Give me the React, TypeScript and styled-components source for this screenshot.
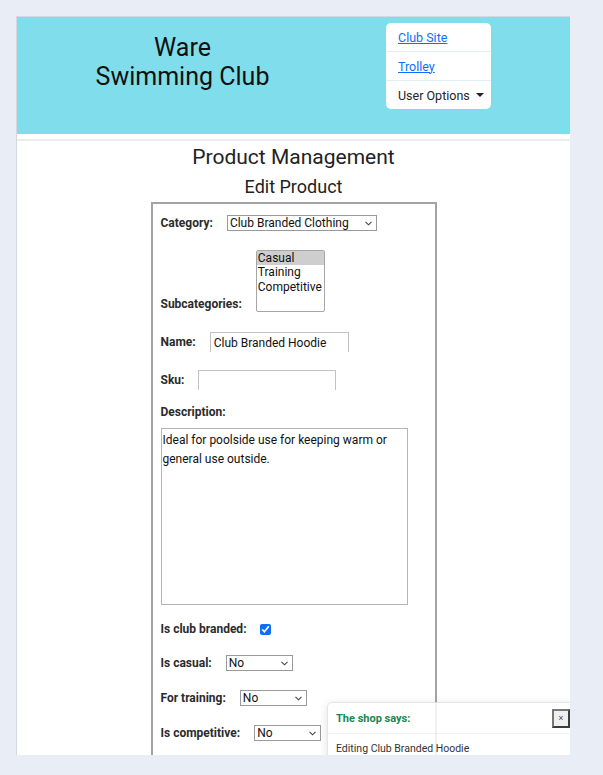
import React from "react";
import styled, { createGlobalStyle } from "styled-components";

const Global = createGlobalStyle`
  html, body { margin: 0; padding: 0; }
  body {
    background: #e9edf5;
    font-family: Roboto, "Liberation Sans", sans-serif;
    color: #212529;
  }
`;

const Frame = styled.div`
  position: relative;
  margin: 16px 0 0 16px;
  width: 554px;
  height: 739px;
  overflow: hidden;
  background: #fff;
  border-left: 1px solid #d4d8df;
  border-top: 1px solid #d4d8df;
  box-sizing: border-box;
`;

const Header = styled.header`
  display: flex;
  align-items: flex-start;
  height: 117px;
  background: #80deec;
`;

const Brand = styled.h1`
  width: 331px;
  margin: 0;
  padding-top: 16px;
  text-align: center;
  font-size: 25px;
  line-height: 29px;
  font-weight: 400;
  color: #111;
`;

const Nav = styled.nav`
  display: flex;
  flex-direction: column;
  width: 105px;
  margin: 6px 0 0 38px;
  background: #fff;
  border-radius: 5px;
  overflow: hidden;
`;

const NavItem = styled.div<{ $last?: boolean }>`
  display: flex;
  align-items: center;
  height: 28px;
  padding-left: 12px;
  font-size: 12.5px;
  border-bottom: ${(p) => (p.$last ? "none" : "1px solid #dff1f4")};
`;

const NavLink = styled.a`
  color: #0d6efd;
  text-decoration: underline;
`;

const Caret = styled.span`
  display: inline-block;
  margin-left: 6px;
  width: 0;
  height: 0;
  border-left: 4px solid transparent;
  border-right: 4px solid transparent;
  border-top: 4px solid #222;
  vertical-align: 2px;
`;

const Divider = styled.div`
  height: 5px;
  border-bottom: 2px solid #ececec;
`;

const Main = styled.main`
  display: flex;
  flex-direction: column;
  align-items: center;
`;

const Title = styled.h2`
  margin: 4px 0 0;
  font-size: 21px;
  line-height: 24px;
  font-weight: 400;
  color: #222;
`;

const SubTitle = styled.h3`
  margin: 7px 0 0;
  font-size: 18px;
  line-height: 22px;
  font-weight: 400;
  color: #222;
`;

const FormBox = styled.form`
  box-sizing: border-box;
  width: 286px;
  margin: 4px 0 0 0;
  padding: 11px 8px 20px;
  border: 2px solid #a3a3a3;
  border-bottom: none;
  display: flex;
  flex-direction: column;
`;

const Row = styled.div<{ $mt: number; $bottom?: boolean }>`
  display: flex;
  align-items: ${(p) => (p.$bottom ? "flex-end" : "center")};
  gap: 14px;
  margin-top: ${(p) => p.$mt}px;
`;

const Label = styled.label`
  font-size: 12px;
  line-height: 15px;
  font-weight: 700;
  color: #2b2b2b;
`;

const SelectWrap = styled.span<{ $w: number }>`
  position: relative;
  display: inline-flex;
  width: ${(p) => p.$w}px;
  height: 16px;
`;

const Select = styled.select`
  appearance: none;
  box-sizing: border-box;
  width: 100%;
  height: 16px;
  padding: 0 14px 0 2px;
  font-family: Roboto, "Liberation Sans", sans-serif;
  font-size: 12px;
  line-height: 14px;
  color: #111;
  background: #fff;
  border: 1px solid #9a9a9a;
  border-radius: 0;
`;

const Chevron = styled.svg`
  position: absolute;
  right: 5px;
  top: 6px;
  width: 7px;
  height: 5px;
  pointer-events: none;
`;

const ListBox = styled.select`
  width: 69px;
  height: 62px;
  padding: 0;
  font-family: Roboto, "Liberation Sans", sans-serif;
  font-size: 12px;
  color: #111;
  border: 1px solid #a6a6a6;
  overflow: hidden;
  option { padding: 0 1px; line-height: 15px; }
`;

const TextInput = styled.input<{ $w: number }>`
  box-sizing: border-box;
  width: ${(p) => p.$w}px;
  height: 20px;
  padding: 0 3px;
  font-family: Roboto, "Liberation Sans", sans-serif;
  font-size: 12px;
  color: #111;
  border: 1px solid #c2c2c2;
  border-bottom: none;
  outline: none;
`;

const TextArea = styled.textarea`
  box-sizing: border-box;
  width: 247px;
  height: 177px;
  margin-top: 8px;
  padding: 2px 1px;
  font-family: Roboto, "Liberation Sans", sans-serif;
  font-size: 12px;
  line-height: 19px;
  color: #111;
  border: 1px solid #b5b5b5;
  resize: none;
`;

const Check = styled.input`
  width: 11px;
  height: 11px;
  margin: 0 0 0 -1px;
  accent-color: #0d6efd;
`;

const Toast = styled.div`
  position: absolute;
  left: 310px;
  top: 685px;
  width: 245px;
  background: rgba(255, 255, 255, 0.85);
  border: 1px solid rgba(0, 0, 0, 0.1);
  border-radius: 5px;
  box-shadow: 0 2px 10px rgba(0, 0, 0, 0.12);
`;

const ToastHead = styled.div`
  display: flex;
  align-items: center;
  justify-content: space-between;
  height: 30px;
  padding: 0 3px 0 8px;
  border-bottom: 1px solid rgba(0, 0, 0, 0.05);
`;

const ToastTitle = styled.strong`
  font-size: 11px;
  color: #198754;
`;

const CloseBtn = styled.button`
  box-sizing: border-box;
  width: 18px;
  height: 19px;
  padding: 0;
  font-size: 9px;
  line-height: 1;
  color: #444;
  background: #efefef;
  border: 2px solid #3c3c3c;
  border-top-color: #777;
  border-left-color: #777;
`;

const ToastBody = styled.div`
  padding: 8px 8px;
  font-size: 10.5px;
  color: #333;
`;

function DropDown({ w, value }: { w: number; value: string }) {
  return (
    <SelectWrap $w={w}>
      <Select defaultValue={value}>
        <option value={value}>{value}</option>
      </Select>
      <Chevron viewBox="0 0 7 5">
        <path d="M0.5 0.8 L3.5 3.8 L6.5 0.8" fill="none" stroke="#444" strokeWidth="1.1" />
      </Chevron>
    </SelectWrap>
  );
}

export default function App() {
  return (
    <>
      <Global />
      <Frame>
        <Header>
          <Brand>
            Ware
            <br />
            Swimming Club
          </Brand>
          <Nav>
            <NavItem>
              <NavLink href="#">Club Site</NavLink>
            </NavItem>
            <NavItem>
              <NavLink href="#">Trolley</NavLink>
            </NavItem>
            <NavItem $last>
              User Options
              <Caret />
            </NavItem>
          </Nav>
        </Header>
        <Divider />
        <Main>
          <Title>Product Management</Title>
          <SubTitle>Edit Product</SubTitle>
          <FormBox>
            <Row $mt={0}>
              <Label>Category:</Label>
              <DropDown w={150} value="Club Branded Clothing" />
            </Row>
            <Row $mt={19} $bottom>
              <Label>Subcategories:</Label>
              <ListBox multiple size={4} defaultValue={["casual"]}>
                <option value="casual">Casual</option>
                <option value="training">Training</option>
                <option value="competitive">Competitive</option>
              </ListBox>
            </Row>
            <Row $mt={20}>
              <Label>Name:</Label>
              <TextInput $w={139} defaultValue="Club Branded Hoodie" />
            </Row>
            <Row $mt={18}>
              <Label>Sku:</Label>
              <TextInput $w={138} defaultValue="" />
            </Row>
            <Row $mt={15}>
              <Label>Description:</Label>
            </Row>
            <TextArea defaultValue="Ideal for poolside use for keeping warm or general use outside." />
            <Row $mt={17}>
              <Label>Is club branded:</Label>
              <Check type="checkbox" defaultChecked />
            </Row>
            <Row $mt={18}>
              <Label>Is casual:</Label>
              <DropDown w={67} value="No" />
            </Row>
            <Row $mt={19}>
              <Label>For training:</Label>
              <DropDown w={67} value="No" />
            </Row>
            <Row $mt={19}>
              <Label>Is competitive:</Label>
              <DropDown w={67} value="No" />
            </Row>
          </FormBox>
        </Main>
        <Toast>
          <ToastHead>
            <ToastTitle>The shop says:</ToastTitle>
            <CloseBtn type="button">×</CloseBtn>
          </ToastHead>
          <ToastBody>Editing Club Branded Hoodie</ToastBody>
        </Toast>
      </Frame>
    </>
  );
}
